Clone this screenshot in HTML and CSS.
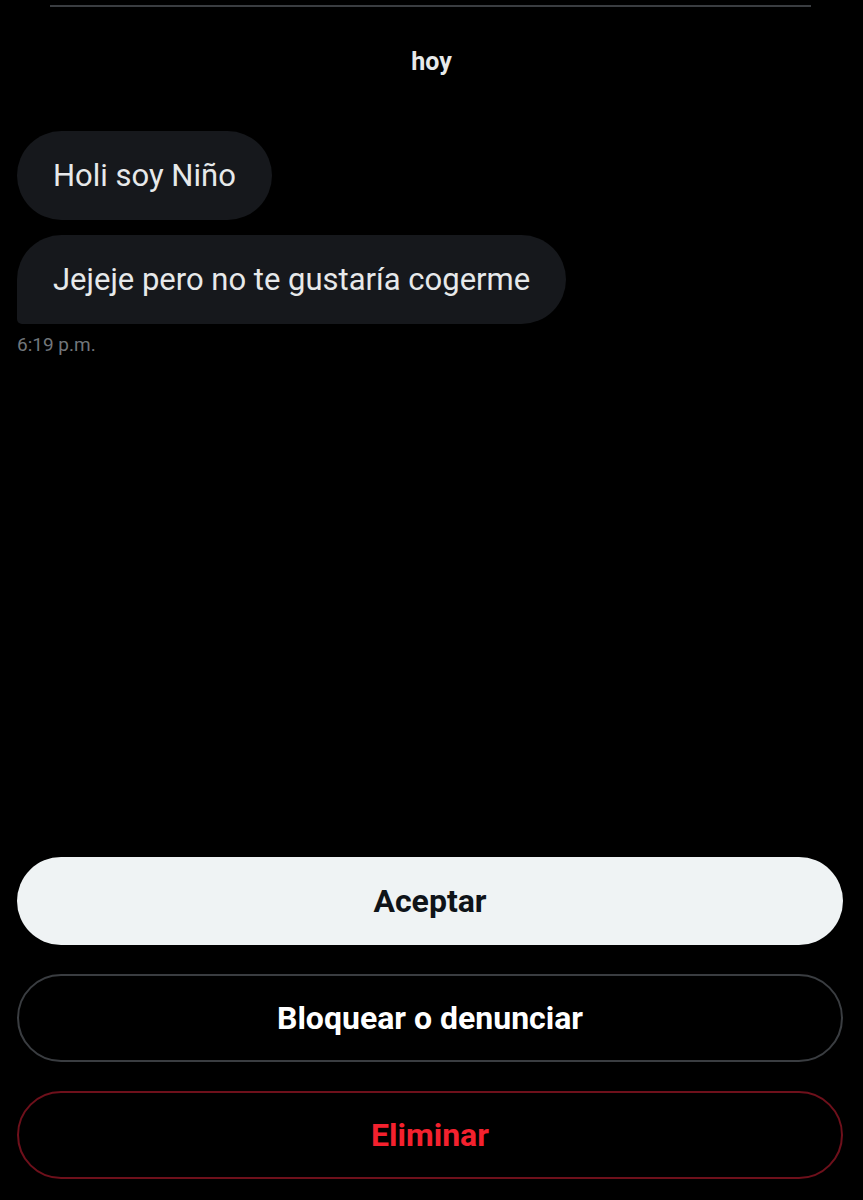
FILE: index.html
```html
<!DOCTYPE html>
<html>
<head>
  <title>Solicitud de mensaje</title>
  <link rel="stylesheet" href="styles.css">
</head>
<body>
  <div class="screen">
    <div class="divider"></div>

    <div class="day">hoy</div>

    <div class="messages">
      <div class="bubble">Holi soy Niño</div>
      <div class="bubble last">Jejeje pero no te gustaría cogerme</div>
      <div class="time">6:19 p.m.</div>
    </div>

    <div class="actions">
      <button class="btn btn-accept">Aceptar</button>
      <button class="btn btn-block">Bloquear o denunciar</button>
      <button class="btn btn-delete">Eliminar</button>
    </div>
  </div>
</body>
</html>
```

FILE: styles.css
```css
body {
  margin: 0;
  background-color: #000;
  color: #e7e9ea;
  font-family: Roboto, "Liberation Sans", sans-serif;
}

.screen {
  height: 1200px;
  display: flex;
  flex-direction: column;
}

.divider {
  height: 2px;
  margin: 5px 52px 0 50px;
  background-color: #3a3d41;
}

.day {
  margin-top: 40px;
  text-align: center;
  font-size: 25px;
  font-weight: bold;
  line-height: 30px;
}

.messages {
  flex: 1;
  display: flex;
  flex-direction: column;
  align-items: flex-start;
  gap: 15px;
  padding: 54px 17px 0;
}

.bubble {
  padding: 0 36px;
  height: 89px;
  line-height: 89px;
  border-radius: 45px;
  background-color: #16181c;
  font-size: 31px;
}

.bubble.last {
  border-bottom-left-radius: 5px;
}

.time {
  margin-top: -6px;
  color: #71767b;
  font-size: 19px;
}

.actions {
  display: flex;
  flex-direction: column;
  gap: 29px;
  padding: 0 20px 21px 17px;
}

.btn {
  height: 88px;
  border-radius: 44px;
  font-family: Roboto, "Liberation Sans", sans-serif;
  font-size: 32px;
  font-weight: bold;
  background-color: #000;
  cursor: pointer;
}

.btn-accept {
  background-color: #eff3f4;
  color: #0f1419;
  border: none;
}

.btn-block {
  color: #fff;
  border: 2px solid #3a3d41;
}

.btn-delete {
  color: #f4212e;
  border: 2px solid #6e101b;
}
```
